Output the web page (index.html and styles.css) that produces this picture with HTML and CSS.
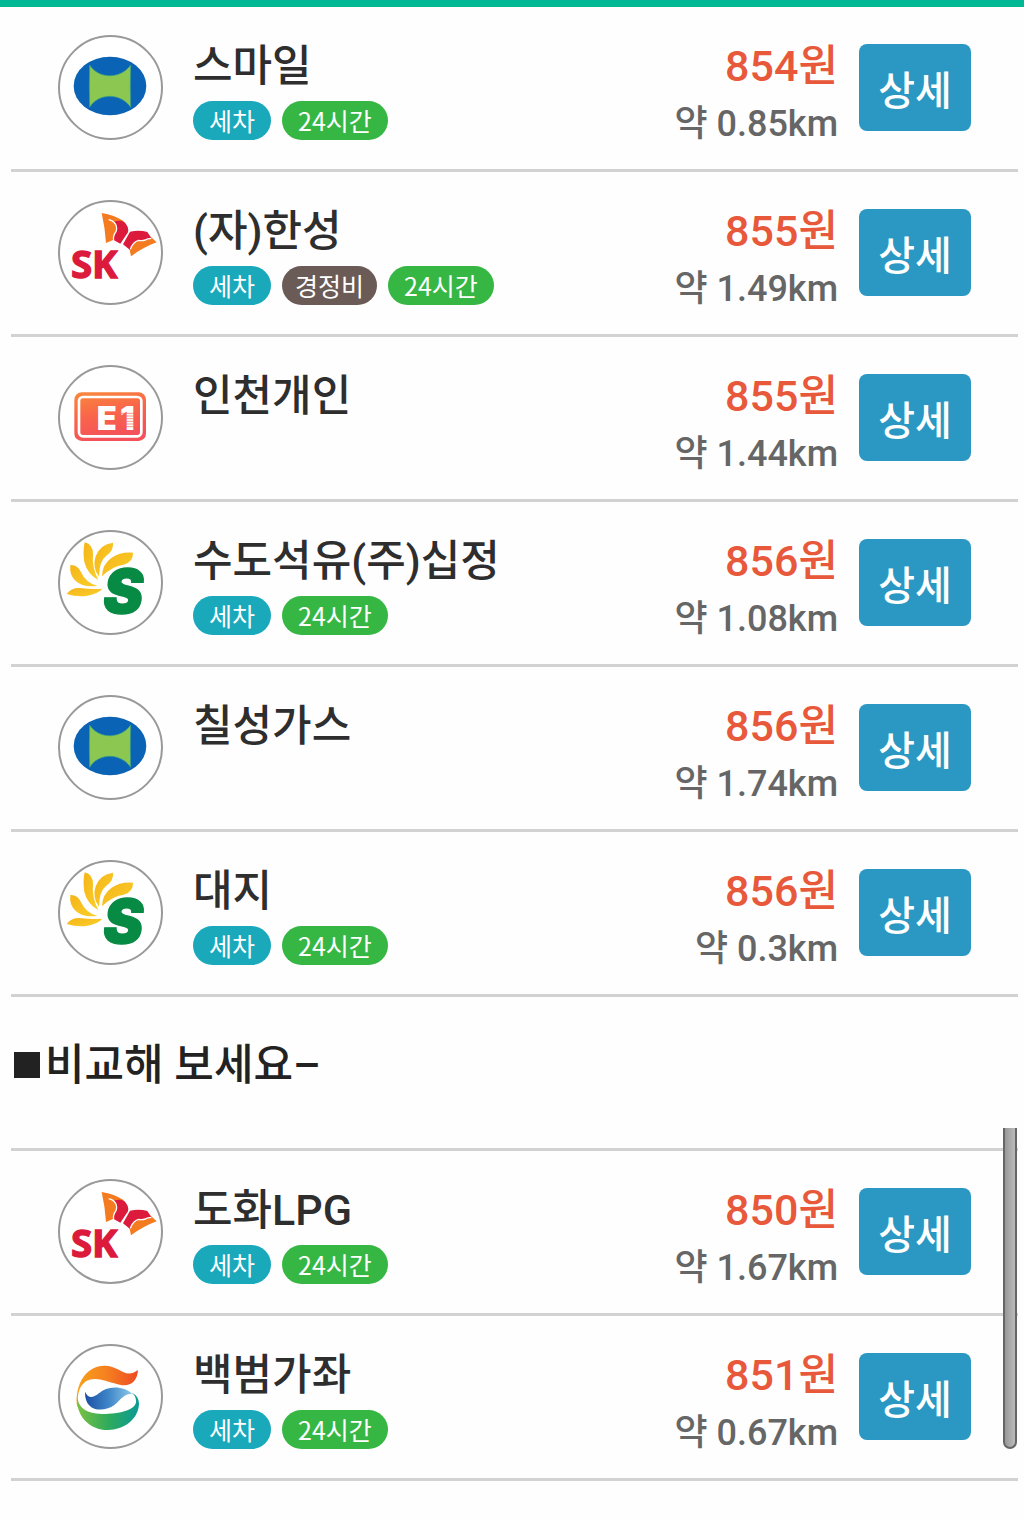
FILE: index.html
```html
<!DOCTYPE html>
<html lang="ko">
<head>
  <meta charset="UTF-8">
  <meta name="viewport" content="width=device-width, initial-scale=1.0">
  <title>LPG 충전소 가격</title>
  <link rel="stylesheet" href="styles.css">
</head>
<body>
  <!-- brand logos -->
  <svg class="defs" aria-hidden="true">
    <defs>
      <linearGradient id="e1-fill" x1="0" y1="0" x2="0.3" y2="1">
        <stop offset="0" stop-color="#f98a3c"/>
        <stop offset="0.5" stop-color="#f9654a"/>
        <stop offset="1" stop-color="#f4515a"/>
      </linearGradient>
      <linearGradient id="gs-orange" x1="0" y1="0" x2="1" y2="0">
        <stop offset="0" stop-color="#f9a11b"/>
        <stop offset="0.5" stop-color="#f57f20"/>
        <stop offset="1" stop-color="#ee4a23"/>
      </linearGradient>
      <linearGradient id="gs-blue" x1="0" y1="0" x2="1" y2="0">
        <stop offset="0" stop-color="#1b4fa3"/>
        <stop offset="0.5" stop-color="#3f86c8"/>
        <stop offset="1" stop-color="#8cc8e8"/>
      </linearGradient>
      <linearGradient id="gs-green" x1="0" y1="0" x2="1" y2="0">
        <stop offset="0" stop-color="#7cc142"/>
        <stop offset="0.5" stop-color="#2fab5b"/>
        <stop offset="1" stop-color="#0a9a96"/>
      </linearGradient>
      <linearGradient id="oil-petal" x1="0" y1="0" x2="1" y2="1">
        <stop offset="0" stop-color="#f5b417"/>
        <stop offset="1" stop-color="#fad02c"/>
      </linearGradient>
      <g id="logo-hd">
        <ellipse cx="180" cy="168" rx="109" ry="88" fill="#0b63b5"/>
        <path d="M119 105 C146 148 212 148 242 105 Q240 168 242 232 C212 188 146 188 119 232 Q117 168 119 105Z" fill="#8cc751" stroke="#3aa08a" stroke-width="2"/>
      </g>
      <g id="sk-wings">
        <path d="M155 54 Q193 60 222 79 L200 84 Q206 98 198 112 Q190 124 191 134 L168 144 Q165 98 155 54Z" fill="#f47b20"/>
        <path d="M190 80 Q210 74 222 80 Q238 95 234 112 L211 146 L191 135 Q188 124 198 110 Q206 94 190 80Z" fill="#dc1a3c"/>
        <path d="M176 74 Q186 76 192 82 Q204 94 198 110 Q188 124 191 135" fill="none" stroke="#fff" stroke-width="4"/>
        <path d="M286 110 L320 142 Q279 157 243 184 L238 160 Q268 120 286 110Z" fill="#f47b20"/>
        <path d="M240 110 Q268 104 292 111 L304 130 Q286 139 268 136 Q248 139 240 165 L219 148Z" fill="#dc1a3c"/>
        <path d="M304 130 Q292 130 286 135 Q276 138 266 136 Q248 141 241 163" fill="none" stroke="#fff" stroke-width="4"/>
      </g>
      <g id="e1-plate">
        <rect x="73" y="97" width="215" height="146" rx="22" fill="url(#e1-fill)"/>
        <rect x="87" y="111" width="187" height="118" rx="12" fill="none" stroke="#fff" stroke-width="8"/>
      </g>
      <g id="soil-petals" fill="url(#oil-petal)">
        <path d="M50 207 Q66 186 96 190 Q125 194 157 191 Q144 206 113 212 Q83 217 50 207Z"/>
        <path d="M61 120 Q84 119 94 143 Q108 174 142 182 Q101 189 78 169 Q57 151 61 120Z"/>
        <path d="M104 52 Q130 59 129 88 Q125 127 145 165 Q112 147 103 111 Q98 79 104 52Z"/>
        <path d="M189 53 Q192 76 169 92 Q148 107 147 155 Q126 128 137 94 Q150 58 189 53Z"/>
        <path d="M249 83 Q250 111 221 119 Q187 123 156 154 Q157 117 185 98 Q211 80 249 83Z"/>
      </g>
      <g id="logo-gs">
        <path d="M82 205 C72 150 100 80 164 80 C210 80 224 122 264 93 C262 128 240 143 213 138 C180 132 150 114 118 122 C88 132 80 166 84 202Z" fill="url(#gs-orange)"/>
        <path d="M105 158 C121 190 139 167 160 154 C188 139 225 144 246 164 C222 164 214 180 193 198 C163 220 103 221 105 158Z" fill="url(#gs-blue)"/>
        <path d="M81 170 C86 210 112 225 166 225 C222 224 262 208 258 184 Q256 168 245 162 C262 168 267 182 267 196 C264 242 222 273 174 273 C118 273 76 230 81 170Z" fill="url(#gs-green)"/>
      </g>
    </defs>
  </svg>

  <div class="top-bar"></div>

  <main>
    <ul class="station-list">
      <li class="station">
        <svg class="logo" viewBox="30 21 303 303" role="img" aria-label="현대오일뱅크"><use href="#logo-hd"/></svg>
        <div class="info">
          <h2>스마일</h2>
          <div class="tags"><span class="tag wash">세차</span><span class="tag open">24시간</span></div>
        </div>
        <div class="price"><strong>854원</strong><span>약 0.85km</span></div>
        <button type="button">상세</button>
      </li>
      <li class="station">
        <svg class="logo" viewBox="30 21 303 303" role="img" aria-label="SK">
          <use href="#sk-wings"/>
          <text x="63" y="250" class="sk-text">SK</text>
        </svg>
        <div class="info">
          <h2>(자)한성</h2>
          <div class="tags"><span class="tag wash">세차</span><span class="tag repair">경정비</span><span class="tag open">24시간</span></div>
        </div>
        <div class="price"><strong>855원</strong><span>약 1.49km</span></div>
        <button type="button">상세</button>
      </li>
      <li class="station">
        <svg class="logo" viewBox="30 21 303 303" role="img" aria-label="E1">
          <use href="#e1-plate"/>
          <text x="140 210" y="209" class="e1-text">E1</text>
          <path d="M214 160H262M214 168H262M214 176H262M214 184H262M214 192H262M214 200H262" stroke="#f9654a" stroke-width="2"/>
        </svg>
        <div class="info">
          <h2>인천개인</h2>
        </div>
        <div class="price"><strong>855원</strong><span>약 1.44km</span></div>
        <button type="button">상세</button>
      </li>
      <li class="station">
        <svg class="logo" viewBox="30 21 303 303" role="img" aria-label="S-OIL">
          <use href="#soil-petals"/>
          <text x="160" y="265" class="soil-text">S</text>
        </svg>
        <div class="info">
          <h2>수도석유(주)십정</h2>
          <div class="tags"><span class="tag wash">세차</span><span class="tag open">24시간</span></div>
        </div>
        <div class="price"><strong>856원</strong><span>약 1.08km</span></div>
        <button type="button">상세</button>
      </li>
      <li class="station">
        <svg class="logo" viewBox="30 21 303 303" role="img" aria-label="현대오일뱅크"><use href="#logo-hd"/></svg>
        <div class="info">
          <h2>칠성가스</h2>
        </div>
        <div class="price"><strong>856원</strong><span>약 1.74km</span></div>
        <button type="button">상세</button>
      </li>
      <li class="station">
        <svg class="logo" viewBox="30 21 303 303" role="img" aria-label="S-OIL">
          <use href="#soil-petals"/>
          <text x="160" y="265" class="soil-text">S</text>
        </svg>
        <div class="info">
          <h2>대지</h2>
          <div class="tags"><span class="tag wash">세차</span><span class="tag open">24시간</span></div>
        </div>
        <div class="price"><strong>856원</strong><span>약 0.3km</span></div>
        <button type="button">상세</button>
      </li>
    </ul>

    <h1><span class="square"></span>비교해 보세요–</h1>

    <div class="compare">
      <ul class="station-list">
        <li class="station">
          <svg class="logo" viewBox="30 21 303 303" role="img" aria-label="SK">
            <use href="#sk-wings"/>
            <text x="63" y="250" class="sk-text">SK</text>
          </svg>
          <div class="info">
            <h2>도화LPG</h2>
            <div class="tags"><span class="tag wash">세차</span><span class="tag open">24시간</span></div>
          </div>
          <div class="price"><strong>850원</strong><span>약 1.67km</span></div>
          <button type="button">상세</button>
        </li>
        <li class="station">
          <svg class="logo" viewBox="30 21 303 303" role="img" aria-label="GS칼텍스"><use href="#logo-gs"/></svg>
          <div class="info">
            <h2>백범가좌</h2>
            <div class="tags"><span class="tag wash">세차</span><span class="tag open">24시간</span></div>
          </div>
          <div class="price"><strong>851원</strong><span>약 0.67km</span></div>
          <button type="button">상세</button>
        </li>
      </ul>
      <div class="scroll-thumb"></div>
    </div>
  </main>
</body>
</html>
```
FILE: styles.css
```css
* {
  box-sizing: border-box;
}
body {
  margin: 0;
  font-family: Roboto, "Noto Sans CJK KR", sans-serif;
  background-color: #fefefe;
  color: #2e2e2e;
}
.defs {
  display: block;
  width: 0;
  height: 0;
}
.top-bar {
  height: 7px;
  background-color: #00b894;
}
.station-list {
  list-style: none;
  margin: 0 6px 0 11px;
  padding: 0;
}
.station {
  display: flex;
  align-items: flex-start;
  min-height: 165px;
  padding: 28px 47px 0;
  border-bottom: 3px solid #d2d2d2;
}
.logo {
  flex: none;
  width: 105px;
  height: 105px;
  border: 2px solid #999;
  border-radius: 50%;
  background-color: white;
}
.sk-text {
  font: 700 115px "Open Sans", sans-serif;
  fill: #dc1a3c;
  stroke: #dc1a3c;
  stroke-width: 4px;
}
.e1-text {
  font: 900 98px Inter, sans-serif;
  fill: white;
}
.soil-text {
  font: italic 900 180px Inter, sans-serif;
  fill: #078a43;
  stroke: #078a43;
  stroke-width: 4px;
}
.info {
  flex: 1;
  padding-top: 1px;
  padding-left: 30px;
}
h2 {
  margin: 0;
  font-size: 43px;
  font-weight: 500;
  line-height: 60px;
}
.tags {
  display: flex;
  gap: 11px;
  margin-top: 5px;
}
.tag {
  height: 39px;
  padding: 0 16px;
  border-radius: 20px;
  font-family: "Noto Sans CJK KR", sans-serif;
  font-size: 25px;
  font-weight: 400;
  line-height: 38px;
  color: white;
}
.wash {
  background-color: #19a9bb;
}
.repair {
  padding: 0 13px;
  background-color: #6b5b57;
}
.open {
  background-color: #36b744;
}
.price {
  display: flex;
  flex-direction: column;
  align-items: flex-end;
  margin-right: 21px;
}
.price strong {
  font-size: 43px;
  font-weight: 500;
  line-height: 62px;
  color: #e8583a;
}
.price span {
  font-size: 36px;
  font-weight: 500;
  line-height: 54px;
  color: #666;
}
button {
  width: 112px;
  height: 87px;
  margin-top: 9px;
  padding: 0;
  border: none;
  border-radius: 8px;
  background-color: #2a98c2;
  color: white;
  font-family: inherit;
  font-size: 40px;
  font-weight: 500;
  cursor: pointer;
}
h1 {
  display: flex;
  align-items: center;
  gap: 5px;
  margin: 0;
  padding: 36px 14px 51px;
  font-size: 43px;
  font-weight: 500;
  line-height: 64px;
  color: #222;
}
.square {
  width: 26px;
  height: 26px;
  background-color: #222;
}
.compare {
  position: relative;
}
.compare .station-list {
  border-top: 3px solid #d2d2d2;
}
.scroll-thumb {
  position: absolute;
  top: -20px;
  right: 7px;
  width: 14px;
  height: 321px;
  border: 2px solid #666;
  border-top: none;
  border-radius: 0 0 7px 7px;
  background: linear-gradient(to right, #999, #bbb);
}
```
